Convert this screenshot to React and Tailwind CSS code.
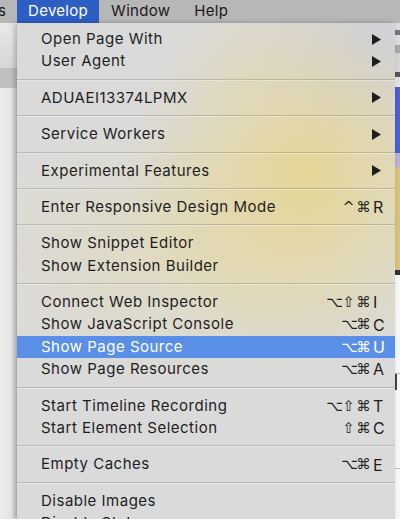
import React from 'react';

const items = [
  { t: 'Open Page With', arrow: true },
  { t: 'User Agent', arrow: true },
  'sep',
  { t: 'ADUAEI13374LPMX', arrow: true },
  'sep',
  { t: 'Service Workers', arrow: true },
  'sep',
  { t: 'Experimental Features', arrow: true },
  'sep',
  { t: 'Enter Responsive Design Mode', mods: ['^', '⌘'], key: 'R' },
  'sep',
  { t: 'Show Snippet Editor' },
  { t: 'Show Extension Builder' },
  'sep',
  { t: 'Connect Web Inspector', mods: ['⌥', '⇧', '⌘'], key: 'I' },
  { t: 'Show JavaScript Console', mods: ['⌥', '⌘'], key: 'C' },
  { t: 'Show Page Source', mods: ['⌥', '⌘'], key: 'U', hl: true },
  { t: 'Show Page Resources', mods: ['⌥', '⌘'], key: 'A' },
  'sep',
  { t: 'Start Timeline Recording', mods: ['⌥', '⇧', '⌘'], key: 'T' },
  { t: 'Start Element Selection', mods: ['⇧', '⌘'], key: 'C' },
  'sep',
  { t: 'Empty Caches', mods: ['⌥', '⌘'], key: 'E' },
  'sep',
  { t: 'Disable Images' },
  { t: 'Disable Styles' },
];

function Arrow({ hl }) {
  return (
    <svg width="9" height="11" viewBox="0 0 9 11" className="mr-[4px]">
      <path d="M0 0 L9 5.5 L0 11 Z" fill={hl ? '#fff' : '#1e1e1e'} />
    </svg>
  );
}

function Row({ it }) {
  const hl = it.hl;
  return (
    <div
      className={
        'flex items-center h-[22.4px] shrink-0 pl-[24px] pr-[10px] ' +
        (hl ? 'bg-[#5a8fe8] text-white' : 'text-[#1e1e1e]')
      }
    >
      <span className="flex-1 whitespace-nowrap tracking-[0.5px]">{it.t}</span>
      {it.arrow && <Arrow hl={hl} />}
      {it.mods && (
        <div className="flex items-center">
          {it.mods.map((m, i) => (
            <span
              key={i}
              className="w-[15px] text-center font-['DejaVu_Sans',sans-serif] text-[14.5px] leading-none"
            >
              {m}
            </span>
          ))}
          <span className="w-[12px] ml-[2px] text-[16px] leading-none">{it.key}</span>
        </div>
      )}
    </div>
  );
}

function Sep() {
  return (
    <div className="h-[14px] shrink-0 flex flex-col justify-center">
      <div className="h-px bg-black/15" />
      <div className="h-px bg-white/30" />
    </div>
  );
}

export default function App() {
  return (
    <div className="w-[400px] h-[519px] overflow-hidden flex flex-col font-['Inter',sans-serif] text-[15px] bg-[#ececec]">
      {/* Menu bar */}
      <div className="h-[23px] shrink-0 flex items-stretch bg-[#b7b7b7] text-[#1a1a1a] tracking-[0.3px]">
        <span className="ml-[-2px] w-[19px] flex items-center">s</span>
        <span className="flex items-center px-[11px] bg-[#2d5ec3] text-white">Develop</span>
        <span className="flex items-center px-[12px]">Window</span>
        <span className="flex items-center px-[12px]">Help</span>
      </div>

      <div className="flex-1 flex min-h-0">
        {/* left background window */}
        <div className="w-[17px] shrink-0 flex flex-col">
          <div className="h-[45px] bg-[linear-gradient(to_bottom,#e8e8e8,#d6d6d6)]" />
          <div className="h-[20px] bg-[#bfbfbf]" />
          <div className="flex-1 bg-[linear-gradient(to_right,#ededed,#e6e6e6_60%,#d2d2d2)]" />
        </div>

        {/* menu */}
        <div className="w-[378px] shrink-0 flex flex-col pt-[5px] bg-[#dadada] bg-[radial-gradient(ellipse_180px_200px_at_290px_150px,rgba(234,212,130,0.75),rgba(234,212,130,0)),radial-gradient(ellipse_140px_120px_at_360px_20px,rgba(198,204,232,0.7),rgba(198,204,232,0)),radial-gradient(ellipse_220px_130px_at_160px_230px,rgba(230,220,170,0.5),rgba(230,220,170,0))] shadow-[-2px_0_5px_rgba(0,0,0,0.25)] z-10">
          {items.map((it, i) =>
            it === 'sep' ? <Sep key={i} /> : <Row key={i} it={it} />
          )}
        </div>

        {/* right background strip */}
        <div className="w-[5px] shrink-0 flex flex-col">
          <div className="h-[7px] bg-[#dedede]" />
          <div className="h-[5px] bg-[#777]" />
          <div className="h-[10px] bg-[#dcdcdc]" />
          <div className="h-[8px] bg-[#a9a9a9]" />
          <div className="h-[19px] bg-[#d4d4d4]" />
          <div className="h-[5px] bg-[#555]" />
          <div className="h-[10px] bg-[#e2e2e2]" />
          <div className="h-[66px] bg-[#4b5fd6]" />
          <div className="h-[14px] bg-[#b8b2d8]" />
          <div className="h-[103px] bg-[#d9c27a]" />
          <div className="h-[5px] bg-[#333]" />
          <div className="h-[98px] bg-[#f7f7f7]" />
          <div className="h-px bg-[#bbb]" />
          <div className="h-[16px] bg-[#f7f7f7] flex"><div className="w-[2px] bg-[#444]" /></div>
          <div className="h-[78px] bg-[#f7f7f7]" />
          <div className="h-px bg-[#bbb]" />
          <div className="flex-1 bg-[#f7f7f7]" />
        </div>
      </div>
    </div>
  );
}
